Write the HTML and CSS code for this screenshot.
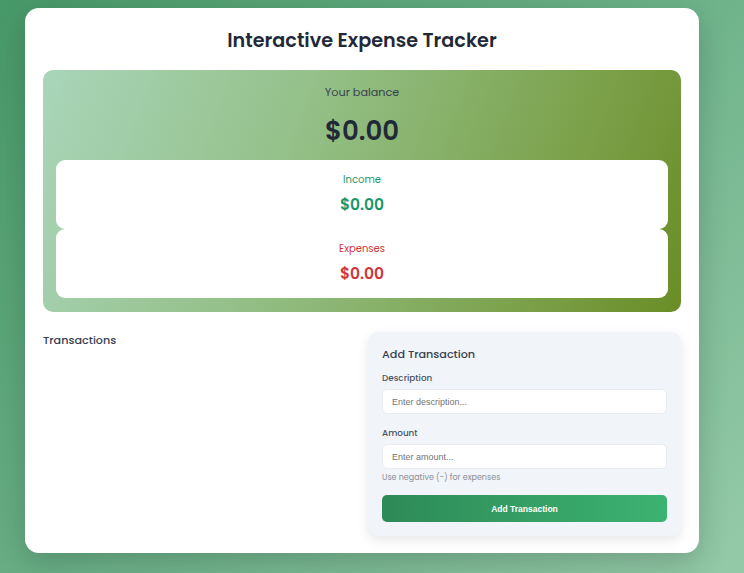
FILE: index.html
```html
<!DOCTYPE html>
<html lang="en">
<head>
    <meta charset="UTF-8">
    <meta name="viewport" content="width=device-width, initial-scale=1.0">
    <title>Interactive Expense Tracker</title>
    <link rel="stylesheet" href="styles.css">
</head>
<body>
    <div class="container">
        <h1>Interactive Expense Tracker</h1>

        <div class="balance-card">
            <div class="balance-label">Your balance</div>
            <div class="balance-amount" id="balance">$0.00</div>

            <div class="summary income">
                <div class="summary-label">Income</div>
                <div class="summary-amount" id="income">$0.00</div>
            </div>
            <div class="summary expense">
                <div class="summary-label">Expenses</div>
                <div class="summary-amount" id="expense">$0.00</div>
            </div>
        </div>

        <div class="bottom">
            <div class="transactions">
                <h3>Transactions</h3>
                <ul class="list" id="list"></ul>
            </div>

            <form class="add-form" id="form">
                <h3>Add Transaction</h3>
                <label for="text">Description</label>
                <input type="text" id="text" placeholder="Enter description...">
                <label for="amount">Amount</label>
                <input type="number" id="amount" placeholder="Enter amount...">
                <small>Use negative (-) for expenses</small>
                <button type="submit">Add Transaction</button>
            </form>
        </div>
    </div>
</body>
</html>
```

FILE: styles.css
```css
* {
    box-sizing: border-box;
}

body {
    margin: 0;
    padding: 8px 25px 20px 25px;
    font-family: 'Poppins', 'Noto Sans', sans-serif;
    background: linear-gradient(135deg, #479868 0%, #6fb38b 55%, #95caa8 100%);
    min-height: 100vh;
    color: #1f2937;
}

.container {
    width: 674px;
    background: #fff;
    border-radius: 14px;
    padding: 18px 18px 17px 18px;
    box-shadow: 0 10px 30px rgba(0, 0, 0, 0.18);
}

h1 {
    margin: 0 0 14px 0;
    font-size: 19.2px;
    font-weight: 600;
    text-align: center;
    color: #1f2937;
    line-height: 30px;
}

.balance-card {
    background: linear-gradient(110deg, #a9d5ba 0%, #93bf86 40%, #7da34e 75%, #6a8d27 100%);
    border-radius: 10px;
    padding: 14px 13px 14px 13px;
    text-align: center;
}

.balance-label {
    font-size: 11.2px;
    color: #374151;
    line-height: 16px;
}

.balance-amount {
    font-size: 26px;
    font-weight: 600;
    color: #1f2937;
    margin: 11px 0 9px 0;
    line-height: 40px;
}

.summary {
    background: #fff;
    border-radius: 9px;
    height: 69px;
    padding-top: 12px;
}

.summary-label {
    font-size: 10px;
    line-height: 16px;
}

.summary-amount {
    font-size: 15.5px;
    font-weight: 600;
    line-height: 24px;
    margin-top: 5px;
}

.income {
    color: #17966b;
}

.expense {
    color: #d3343a;
}

.bottom {
    display: grid;
    grid-template-columns: 1fr 1fr;
    gap: 12px;
    margin-top: 20px;
}

.transactions h3 {
    margin: 0;
    font-size: 11.2px;
    font-weight: 500;
    color: #374151;
}

.list {
    list-style: none;
    margin: 0;
    padding: 0;
}

.add-form {
    background: #f1f4f8;
    border-radius: 10px;
    padding: 14px;
    box-shadow: 0 4px 12px rgba(0, 0, 0, 0.1);
    display: flex;
    flex-direction: column;
}

.add-form h3 {
    margin: 0 0 9px 0;
    font-size: 11.2px;
    font-weight: 500;
    color: #374151;
}

.add-form label {
    font-size: 8.8px;
    font-weight: 500;
    color: #4b5563;
    margin-bottom: 4px;
}

.add-form input {
    height: 25px;
    border: 1px solid #e8ebef;
    border-radius: 5px;
    background: #fff;
    padding: 0 9px;
    font-family: 'Liberation Sans', Arial, sans-serif;
    font-size: 9px;
    margin-bottom: 13px;
    outline: none;
}

.add-form input::placeholder {
    color: #757575;
}

.add-form small {
    font-size: 8px;
    color: #8a8f98;
    margin: -10px 0 11px 0;
}

.add-form button {
    height: 27px;
    border: none;
    border-radius: 5px;
    background: linear-gradient(90deg, #2e8a57 0%, #3cb371 100%);
    color: #fff;
    font-family: 'Liberation Sans', Arial, sans-serif;
    font-size: 8.5px;
    font-weight: 700;
    cursor: pointer;
}
```
